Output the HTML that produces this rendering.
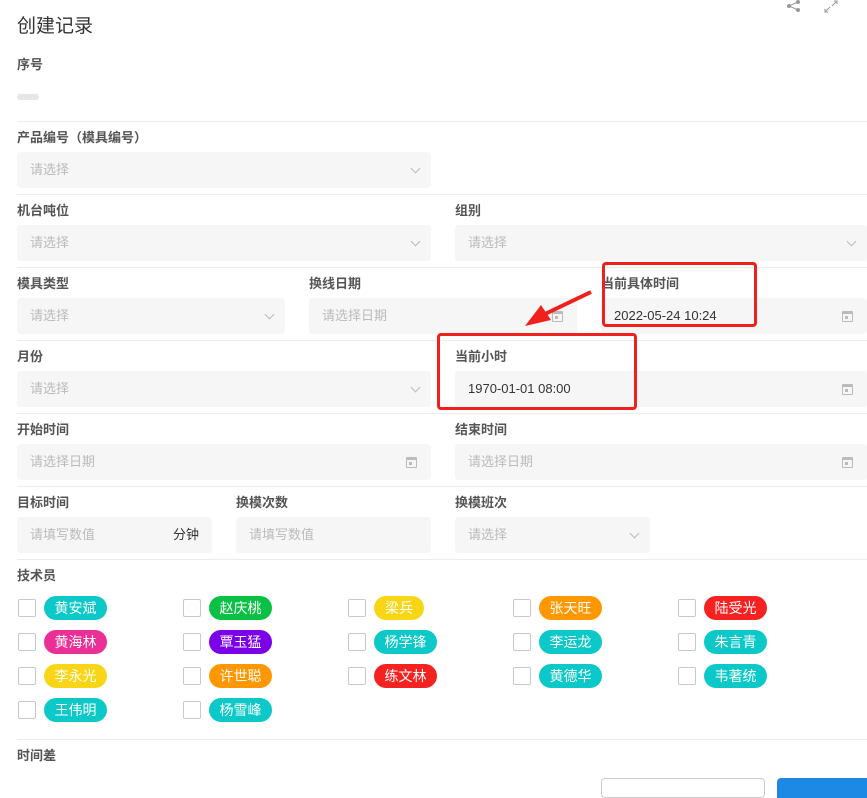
<!DOCTYPE html>
<html><head><meta charset="utf-8"><style>
*{box-sizing:border-box;margin:0;padding:0}
body{width:867px;height:787px;overflow:hidden;background:#fff;position:relative;font-family:"Liberation Sans","Noto Sans CJK SC",sans-serif;color:#333}
.a{position:absolute}
.lbl{position:absolute;font-size:13px;color:#555;font-weight:bold;line-height:16px}
.in{position:absolute;height:36px;background:#f6f6f6;border-radius:4px;font-size:13px;color:#bbb;line-height:36px;padding-left:13px}
.hr{position:absolute;left:17px;right:0;height:1px;background:#ececec}
.chev{position:absolute;right:12px;top:13px;width:7px;height:7px;border-right:1px solid #bbb;border-bottom:1px solid #bbb;transform:rotate(45deg)}
.cal{position:absolute;right:14px;top:13px;width:11px;height:11px;border:1.5px solid #bbb;border-top-width:3px;border-radius:1px}
.cal:after{content:"";position:absolute;left:2px;top:2px;width:3px;height:3px;background:#bbb}
.cb{position:absolute;width:18px;height:18px;border:1px solid #c8c8c8;border-radius:2px;background:#fff}
.tag{position:absolute;height:24px;line-height:24px;border-radius:12px;color:#fff;font-size:14px;text-align:center;width:63px}
.t2{width:50px}
.red{position:absolute;border:3px solid #f0201c;border-radius:4px}
</style></head><body>
<div class="a" style="left:17px;top:11px;font-size:19px;color:#333">创建记录</div>
<svg class="a" style="left:784px;top:0" width="20" height="14"><circle cx="14" cy="2" r="2" fill="#999"/><circle cx="5" cy="6" r="2" fill="#999"/><circle cx="14" cy="10" r="2" fill="#999"/><path d="M14 2L5 6L14 10" stroke="#999" fill="none"/></svg>
<svg class="a" style="left:823px;top:0" width="16" height="14"><path d="M9 6L14 1M11 1H14V4M7 7L2 12M2 9V12H5" stroke="#999" fill="none"/></svg>

<div class="lbl" style="left:17px;top:57px">序号</div>
<div class="a" style="left:17px;top:94px;width:22px;height:6px;border-radius:3px;background:#e6e6e6"></div>
<div class="hr" style="top:121px"></div>

<div class="lbl" style="left:17px;top:130px">产品编号（模具编号）</div>
<div class="in" style="left:17px;top:152px;width:414px">请选择<i class="chev"></i></div>
<div class="hr" style="top:194px"></div>

<div class="lbl" style="left:17px;top:203px">机台吨位</div>
<div class="in" style="left:17px;top:225px;width:414px">请选择<i class="chev"></i></div>
<div class="lbl" style="left:455px;top:203px">组别</div>
<div class="in" style="left:455px;top:225px;width:412px">请选择<i class="chev"></i></div>
<div class="hr" style="top:267px"></div>

<div class="lbl" style="left:17px;top:276px">模具类型</div>
<div class="in" style="left:17px;top:298px;width:268px">请选择<i class="chev"></i></div>
<div class="lbl" style="left:309px;top:276px">换线日期</div>
<div class="in" style="left:309px;top:298px;width:268px">请选择日期<i class="cal"></i></div>
<div class="lbl" style="left:601px;top:276px">当前具体时间</div>
<div class="in" style="left:601px;top:298px;width:266px;color:#333">2022-05-24 10:24<i class="cal"></i></div>
<div class="hr" style="top:340px"></div>

<div class="lbl" style="left:17px;top:349px">月份</div>
<div class="in" style="left:17px;top:371px;width:414px">请选择<i class="chev"></i></div>
<div class="lbl" style="left:455px;top:349px">当前小时</div>
<div class="in" style="left:455px;top:371px;width:412px;color:#333">1970-01-01 08:00<i class="cal"></i></div>
<div class="hr" style="top:413px"></div>

<div class="lbl" style="left:17px;top:422px">开始时间</div>
<div class="in" style="left:17px;top:444px;width:414px">请选择日期<i class="cal"></i></div>
<div class="lbl" style="left:455px;top:422px">结束时间</div>
<div class="in" style="left:455px;top:444px;width:412px">请选择日期<i class="cal"></i></div>
<div class="hr" style="top:486px"></div>

<div class="lbl" style="left:17px;top:495px">目标时间</div>
<div class="in" style="left:17px;top:517px;width:195px">请填写数值<span class="a" style="right:13px;color:#333">分钟</span></div>
<div class="lbl" style="left:236px;top:495px">换模次数</div>
<div class="in" style="left:236px;top:517px;width:195px">请填写数值</div>
<div class="lbl" style="left:455px;top:495px">换模班次</div>
<div class="in" style="left:455px;top:517px;width:195px">请选择<i class="chev"></i></div>
<div class="hr" style="top:559px"></div>

<div class="lbl" style="left:17px;top:568px">技术员</div>

<div class="cb" style="left:18px;top:599px"></div><div class="tag" style="left:44px;top:596px;background:#0cc8c8">黄安斌</div>
<div class="cb" style="left:183px;top:599px"></div><div class="tag" style="left:209px;top:596px;background:#0bc145">赵庆桃</div>
<div class="cb" style="left:348px;top:599px"></div><div class="tag t2" style="left:374px;top:596px;background:#f9d615">梁兵</div>
<div class="cb" style="left:513px;top:599px"></div><div class="tag" style="left:539px;top:596px;background:#ff9800">张天旺</div>
<div class="cb" style="left:678px;top:599px"></div><div class="tag" style="left:704px;top:596px;background:#f52222">陆受光</div>

<div class="cb" style="left:18px;top:633px"></div><div class="tag" style="left:44px;top:630px;background:#ec2f97">黄海林</div>
<div class="cb" style="left:183px;top:633px"></div><div class="tag" style="left:209px;top:630px;background:#7b00e8">覃玉猛</div>
<div class="cb" style="left:348px;top:633px"></div><div class="tag" style="left:374px;top:630px;background:#0cc8c8">杨学锋</div>
<div class="cb" style="left:513px;top:633px"></div><div class="tag" style="left:539px;top:630px;background:#0cc8c8">李运龙</div>
<div class="cb" style="left:678px;top:633px"></div><div class="tag" style="left:704px;top:630px;background:#0cc8c8">朱言青</div>

<div class="cb" style="left:18px;top:667px"></div><div class="tag" style="left:44px;top:664px;background:#f9d615">李永光</div>
<div class="cb" style="left:183px;top:667px"></div><div class="tag" style="left:209px;top:664px;background:#ff9800">许世聪</div>
<div class="cb" style="left:348px;top:667px"></div><div class="tag" style="left:374px;top:664px;background:#f52222">练文林</div>
<div class="cb" style="left:513px;top:667px"></div><div class="tag" style="left:539px;top:664px;background:#0cc8c8">黄德华</div>
<div class="cb" style="left:678px;top:667px"></div><div class="tag" style="left:704px;top:664px;background:#0cc8c8">韦著统</div>

<div class="cb" style="left:18px;top:701px"></div><div class="tag" style="left:44px;top:698px;background:#0cc8c8">王伟明</div>
<div class="cb" style="left:183px;top:701px"></div><div class="tag" style="left:209px;top:698px;background:#0cc8c8">杨雪峰</div>

<div class="hr" style="top:739px"></div>
<div class="lbl" style="left:17px;top:748px">时间差</div>
<div class="a" style="left:601px;top:778px;width:164px;height:20px;border:1px solid #ccc;border-radius:4px"></div>
<div class="a" style="left:777px;top:778px;width:90px;height:20px;background:#1e88e5;border-radius:4px 0 0 0"></div>

<div class="red" style="left:602px;top:262px;width:155px;height:65px"></div>
<div class="red" style="left:437px;top:333px;width:200px;height:77px"></div>
<svg class="a" style="left:515px;top:288px" width="80" height="44"><path d="M76 4L30 26" stroke="#f0201c" stroke-width="4"/><path d="M10 38L26 17L36 32Z" fill="#f0201c"/></svg>
</body></html>
